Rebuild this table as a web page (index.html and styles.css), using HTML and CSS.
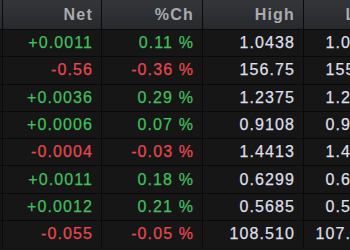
FILE: index.html
```html
<!DOCTYPE html>
<html>
<head>
<meta charset="utf-8">
<link rel="stylesheet" href="styles.css">
</head>
<body>
<div class="grid">
  <div class="cell head spacer"></div>
  <div class="cell head">Net</div>
  <div class="cell head">%Ch</div>
  <div class="cell head">High</div>
  <div class="cell head">Low</div>

  <div class="cell spacer"></div>
  <div class="cell up">+0.0011</div>
  <div class="cell up">0.11 %</div>
  <div class="cell val">1.0438</div>
  <div class="cell val">1.0395</div>

  <div class="cell spacer"></div>
  <div class="cell down">-0.56</div>
  <div class="cell down">-0.36 %</div>
  <div class="cell val">156.75</div>
  <div class="cell val">155.88</div>

  <div class="cell spacer"></div>
  <div class="cell up">+0.0036</div>
  <div class="cell up">0.29 %</div>
  <div class="cell val">1.2375</div>
  <div class="cell val">1.2318</div>

  <div class="cell spacer"></div>
  <div class="cell up">+0.0006</div>
  <div class="cell up">0.07 %</div>
  <div class="cell val">0.9108</div>
  <div class="cell val">0.9080</div>

  <div class="cell spacer"></div>
  <div class="cell down">-0.0004</div>
  <div class="cell down">-0.03 %</div>
  <div class="cell val">1.4413</div>
  <div class="cell val">1.4385</div>

  <div class="cell spacer"></div>
  <div class="cell up">+0.0011</div>
  <div class="cell up">0.18 %</div>
  <div class="cell val">0.6299</div>
  <div class="cell val">0.6278</div>

  <div class="cell spacer"></div>
  <div class="cell up">+0.0012</div>
  <div class="cell up">0.21 %</div>
  <div class="cell val">0.5685</div>
  <div class="cell val">0.5665</div>

  <div class="cell spacer"></div>
  <div class="cell down">-0.055</div>
  <div class="cell down">-0.05 %</div>
  <div class="cell val">108.510</div>
  <div class="cell val">107.885</div>
</div>
</body>
</html>
```
FILE: styles.css
```css
html, body {
  margin: 0;
  padding: 0;
  background: #141414;
  overflow: hidden;
}
body {
  width: 350px;
  height: 250px;
}
.grid {
  display: grid;
  grid-template-columns: 2px 98px 100px 100px 85px;
  grid-template-rows: 29px repeat(8, 26.3px);
  gap: 1px;
  background: #0a0a0a;
  width: max-content;
  font-family: "Liberation Sans", Arial, sans-serif;
  font-size: 16px;
  letter-spacing: 1.1px;
  -webkit-text-stroke: 0.25px currentColor;
}
.cell {
  display: flex;
  align-items: center;
  justify-content: flex-end;
  padding-right: 8px;
  background: #161616;
  white-space: nowrap;
  overflow: hidden;
}
.spacer {
  padding: 0;
}
.head {
  background: linear-gradient(#34363a, #28292c);
  color: #a9abae;
  font-weight: bold;
  font-size: 16px;
  letter-spacing: 1.2px;
  -webkit-text-stroke: 0;
  padding-top: 1px;
}
.up {
  color: #41bf5c;
}
.down {
  color: #e5484e;
}
.val {
  color: #dedee8;
}
```
